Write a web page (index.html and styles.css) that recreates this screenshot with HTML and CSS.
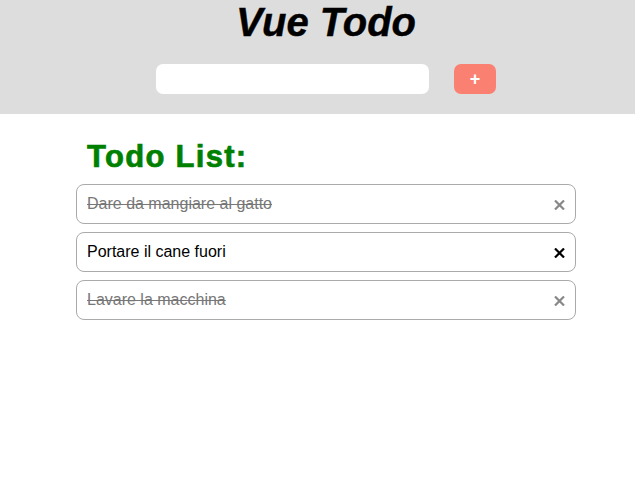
FILE: index.html
```html
<!DOCTYPE html>
<html>
<head>
<meta charset="utf-8">
<link rel="stylesheet" href="styles.css">
</head>
<body>
<header class="header">
  <div class="wrap">
    <h1 class="title">Vue Todo</h1>
    <div class="add-row">
      <input class="add-input" type="text">
      <button class="add-btn">+</button>
    </div>
  </div>
</header>
<main class="wrap">
  <h2 class="list-title">Todo List:</h2>
  <ul class="todos">
    <li class="todo done"><span class="todo-text">Dare da mangiare al gatto</span><svg class="del" width="11" height="10" viewBox="0 0 11 10"><path d="M1 0.5L10 9.5M10 0.5L1 9.5"/></svg></li>
    <li class="todo"><span class="todo-text">Portare il cane fuori</span><svg class="del" width="11" height="10" viewBox="0 0 11 10"><path d="M1 0.5L10 9.5M10 0.5L1 9.5"/></svg></li>
    <li class="todo done"><span class="todo-text">Lavare la macchina</span><svg class="del" width="11" height="10" viewBox="0 0 11 10"><path d="M1 0.5L10 9.5M10 0.5L1 9.5"/></svg></li>
  </ul>
</main>
</body>
</html>
```

FILE: styles.css
```css
* { box-sizing: border-box; }
body {
  margin: 0;
  font-family: "Liberation Sans", Arial, sans-serif;
  background: #fff;
}
.wrap {
  width: 500px;
  margin-left: 76px;
}
.header {
  background: #dddddd;
  height: 114px;
  overflow: hidden;
}
.title {
  margin: 0;
  text-align: center;
  font-size: 40px;
  line-height: 44px;
  font-style: italic;
  font-weight: bold;
  color: #000;
  -webkit-text-stroke: 0.4px #000;
}
.add-row {
  display: flex;
  justify-content: center;
  gap: 25px;
  margin-top: 20px;
}
.add-input {
  width: 273px;
  height: 30px;
  border: none;
  border-radius: 7px;
  background: #fff;
  outline: none;
}
.add-btn {
  width: 42px;
  height: 30px;
  border: none;
  border-radius: 7px;
  background: #fa8072;
  color: #fff;
  font-family: "Liberation Sans", Arial, sans-serif;
  font-weight: bold;
  font-size: 18px;
  padding: 0;
}
.list-title {
  margin: 25px 0 0 11px;
  font-size: 31px;
  line-height: 36px;
  letter-spacing: 1.3px;
  color: #008000;
  font-weight: bold;
  -webkit-text-stroke: 0.7px #008000;
}
.todos {
  list-style: none;
  margin: 9px 0 0 0;
  padding: 0;
  display: flex;
  flex-direction: column;
  gap: 8px;
}
.todo {
  height: 40px;
  border: 1px solid #aaaaaa;
  border-radius: 8px;
  display: flex;
  align-items: center;
  justify-content: space-between;
  padding: 0 10px 0 10px;
  font-size: 16px;
  color: #000;
}
.todo.done .todo-text {
  text-decoration: line-through;
  color: #777;
}
.del {
  fill: none;
  stroke: #000;
  stroke-width: 2.2;
  margin-top: 1px;
}
.todo.done .del { stroke: #888; }
```
